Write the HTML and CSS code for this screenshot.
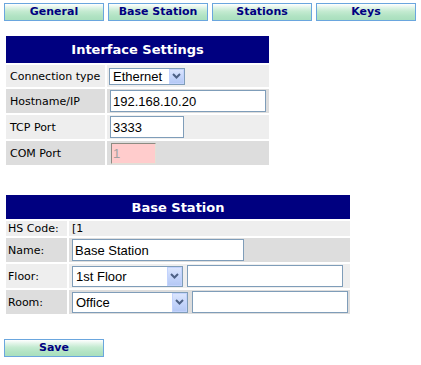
FILE: index.html
```html
<!DOCTYPE html>
<html>
<head>
<meta charset="utf-8">
<title>Base Station</title>
<link rel="stylesheet" href="styles.css">
</head>
<body>
<nav class="tabs">
  <button class="btn">General</button>
  <button class="btn">Base Station</button>
  <button class="btn">Stations</button>
  <button class="btn">Keys</button>
</nav>

<section class="panel panel-iface">
  <h2 class="panel-title">Interface Settings</h2>
  <div class="cell lbl light">Connection type</div>
  <div class="cell val light">
    <span class="sel sel-conn">
      <select><option>Ethernet</option></select>
      <span class="sel-btn"><svg width="9" height="6" viewBox="0 0 9 6"><path d="M1 1 L4.5 4.5 L8 1" fill="none" stroke="#4d6185" stroke-width="2"/></svg></span>
    </span>
  </div>
  <div class="cell lbl dark">Hostname/IP</div>
  <div class="cell val dark"><input class="txt txt-host" type="text" value="192.168.10.20"></div>
  <div class="cell lbl light">TCP Port</div>
  <div class="cell val light"><input class="txt txt-port" type="text" value="3333"></div>
  <div class="cell lbl dark">COM Port</div>
  <div class="cell val dark"><input class="txt txt-com" type="text" value="1" disabled></div>
</section>

<section class="panel panel-base">
  <h2 class="panel-title">Base Station</h2>
  <div class="cell lbl light">HS Code:</div>
  <div class="cell val light">[1</div>
  <div class="cell lbl dark">Name:</div>
  <div class="cell val dark"><input class="txt txt-name" type="text" value="Base Station"></div>
  <div class="cell lbl light">Floor:</div>
  <div class="cell val light pair">
    <span class="sel sel-floor">
      <select><option>1st Floor</option></select>
      <span class="sel-btn"><svg width="9" height="6" viewBox="0 0 9 6"><path d="M1 1 L4.5 4.5 L8 1" fill="none" stroke="#4d6185" stroke-width="2"/></svg></span>
    </span>
    <input class="txt txt-extra" type="text" value="">
  </div>
  <div class="cell lbl dark">Room:</div>
  <div class="cell val dark pair">
    <span class="sel sel-room">
      <select><option>Office</option></select>
      <span class="sel-btn"><svg width="9" height="6" viewBox="0 0 9 6"><path d="M1 1 L4.5 4.5 L8 1" fill="none" stroke="#4d6185" stroke-width="2"/></svg></span>
    </span>
    <input class="txt txt-extra" type="text" value="">
  </div>
</section>

<div class="actions">
  <button class="btn">Save</button>
</div>
</body>
</html>
```

FILE: styles.css
```css
html, body {
  margin: 0;
  background: #ffffff;
}

body {
  padding: 3px 4px;
  font-family: "DejaVu Sans", Verdana, sans-serif;
  font-size: 11px;
  color: #000000;
}

.tabs {
  display: flex;
  gap: 4px;
}

.btn {
  box-sizing: border-box;
  width: 100px;
  height: 18px;
  margin: 0;
  padding: 0;
  border: 1px solid #6aa6de;
  background: linear-gradient(to bottom, #ffffff 0%, #e6f6ec 18%, #c4ebd1 45%, #b1e3c3 75%, #a9dfbd 100%);
  color: #000080;
  font-family: "DejaVu Sans", Verdana, sans-serif;
  font-weight: bold;
  font-size: 11px;
  line-height: 16px;
  text-align: center;
}

.panel {
  display: grid;
  gap: 2px;
  margin-left: 2px;
}

.panel-iface {
  margin-top: 15px;
  width: 263px;
  grid-template-columns: 99px 162px;
  grid-template-rows: 27px 22px 24px 24px 24px;
}

.panel-base {
  margin-top: 30px;
  width: 344px;
  grid-template-columns: 61px 281px;
  grid-template-rows: 24px 15px 24px 24px 24px;
}

.panel-title {
  grid-column: 1 / -1;
  margin: 0;
  background: #000080;
  color: #ffffff;
  font-family: "DejaVu Sans", Verdana, sans-serif;
  font-weight: bold;
  font-size: 13px;
  display: flex;
  align-items: center;
  justify-content: center;
}

.cell {
  display: flex;
  align-items: center;
  box-sizing: border-box;
  white-space: nowrap;
}

.light { background: #eeeeee; }
.dark  { background: #dddddd; }

.panel-iface .lbl { padding-left: 4px; }
.panel-iface .val { padding-left: 2px; }
.panel-base .lbl  { padding-left: 2px; }
.panel-base .val  { padding-left: 3px; }

.pair { gap: 4px; }

.txt {
  box-sizing: border-box;
  height: 22px;
  margin: 0;
  padding: 1px 2px;
  border: 1px solid #7f9db9;
  background: #ffffff;
  font-family: "Liberation Sans", Arial, sans-serif;
  font-size: 13px;
  color: #000000;
  outline: none;
}

.txt-host { width: 156px; margin-left: 1px; }
.txt-port { width: 74px; margin-left: 1px; }
.txt-com {
  width: 45px;
  height: 21px;
  margin-left: 2px;
  padding: 1px 1px;
  background: #ffcccc;
  color: #a0a0a0;
  border: 1px solid;
  border-color: #8d8b82 #e2e0d6 #e2e0d6 #8d8b82;
}
.txt-name { width: 172px; }
.txt-extra { width: 156px; }

.sel {
  position: relative;
  display: inline-block;
  box-sizing: border-box;
}

.sel select {
  -webkit-appearance: none;
  appearance: none;
  box-sizing: border-box;
  display: block;
  width: 100%;
  height: 100%;
  margin: 0;
  padding: 0 0 0 3px;
  border: 1px solid #7f9db9;
  border-radius: 0;
  background: #ffffff;
  font-family: "Liberation Sans", Arial, sans-serif;
  font-size: 13px;
  color: #000000;
  outline: none;
}

.sel-conn  { width: 76px;  height: 17px; }
.sel-floor { width: 111px; height: 21px; }
.sel-room  { width: 116px; height: 21px; }

.sel-btn {
  position: absolute;
  top: 1px;
  bottom: 1px;
  right: 1px;
  width: 15px;
  box-sizing: border-box;
  border: 1px solid #c3d3fd;
  background: linear-gradient(to bottom, #dce6fd 0%, #c6d6fb 50%, #b5c9f5 100%);
  display: flex;
  align-items: center;
  justify-content: center;
}

.actions {
  margin-top: 25px;
}
```
